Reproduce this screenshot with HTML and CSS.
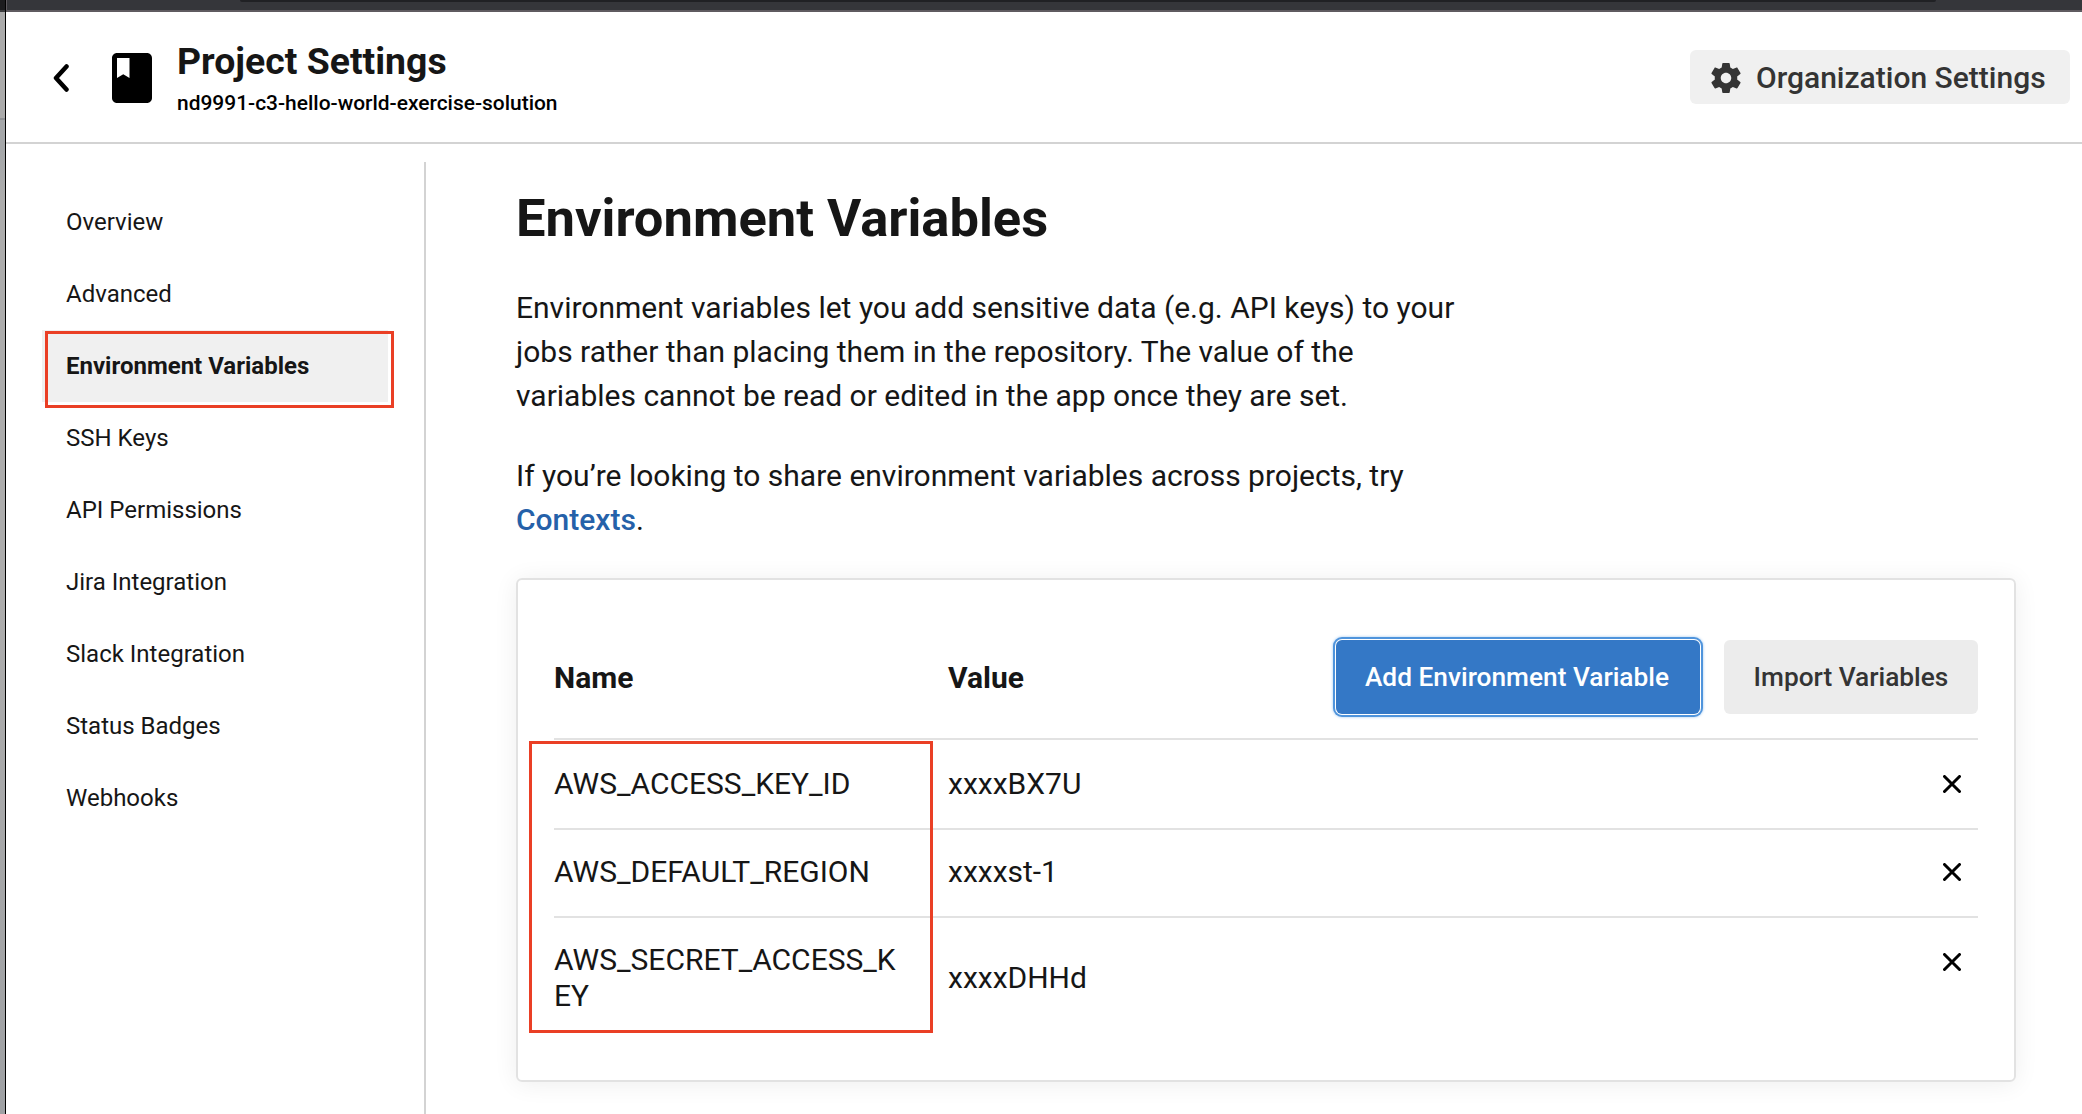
FILE: index.html
```html
<!DOCTYPE html>
<html lang="en">
<head>
<meta charset="utf-8">
<title>Project Settings</title>
<link rel="stylesheet" href="styles.css">
</head>
<body>
<div class="desktop-edge"></div>
<div class="window">
  <div class="browser-bar"><div class="address"></div></div>
  <header class="header">
    <svg class="back" viewBox="0 0 16 28"><path d="M13.500 2.500 3 14 13.500 25.500"/></svg>
    <svg class="book" viewBox="0 0 24 24"><path d="M18 2H6c-1.100 0-2 .9-2 2v16c0 1.100.9 2 2 2h12c1.100 0 2-.9 2-2V4c0-1.100-.9-2-2-2zM6 4h5v8l-2.500-1.500L6 12V4z"/></svg>
    <div class="titles">
      <div class="title"><span>Project Settings</span></div>
      <div class="project"><span>nd9991-c3-hello-world-exercise-solution</span></div>
    </div>
    <a class="org"><svg class="gear" viewBox="0 0 24 24"><path d="M19.430 12.980c.04-.32.07-.64.07-.98s-.03-.66-.07-.98l2.110-1.650c.19-.15.24-.42.12-.64l-2-3.460c-.12-.22-.39-.3-.61-.22l-2.490 1c-.52-.4-1.080-.73-1.690-.98l-.38-2.650C14.460 2.180 14.250 2 14 2h-4c-.25 0-.46.18-.49.42l-.38 2.650c-.61.25-1.170.59-1.690.98l-2.490-1c-.23-.09-.49 0-.61.22l-2 3.460c-.13.22-.07.49.12.64l2.110 1.650c-.04.32-.07.65-.07.98s.03.66.07.98l-2.110 1.650c-.19.15-.24.42-.12.64l2 3.460c.12.22.39.3.61.22l2.490-1c.52.4 1.080.73 1.690.98l.38 2.650c.03.24.24.42.49.42h4c.25 0 .46-.18.49-.42l.38-2.650c.61-.25 1.170-.59 1.690-.98l2.490 1c.23.09.49 0 .61-.22l2-3.460c.12-.22.07-.49-.12-.64l-2.110-1.650zM12 15.500c-1.930 0-3.500-1.570-3.500-3.500s1.570-3.500 3.500-3.500 3.500 1.570 3.500 3.500-1.570 3.500-3.500 3.500z"/></svg><span>Organization Settings</span></a>
  </header>
  <div class="body">
    <nav class="nav">
      <a>Overview</a>
      <a>Advanced</a>
      <a class="active">Environment Variables<i class="mark mark-nav"></i></a>
      <a>SSH Keys</a>
      <a>API Permissions</a>
      <a>Jira Integration</a>
      <a>Slack Integration</a>
      <a>Status Badges</a>
      <a>Webhooks</a>
    </nav>
    <main class="main">
      <h1><span>Environment Variables</span></h1>
      <p>Environment variables let you add sensitive data (e.g. API keys) to your<br>jobs rather than placing them in the repository. The value of the<br>variables cannot be read or edited in the app once they are set.</p>
      <p>If you’re looking to share environment variables across projects, try<br><a class="link">Contexts</a>.</p>
      <section class="card">
        <div class="row head">
          <div class="label">Name</div><div class="label">Value</div>
          <div class="actions"><button class="btn primary">Add Environment Variable</button><button class="btn">Import Variables</button></div>
        </div>
        <div class="row">
          <div>AWS_ACCESS_KEY_ID</div><div>xxxxBX7U</div>
          <svg class="x" viewBox="0 0 18 18"><path d="M1.500 1.500l15 15M16.500 1.500l-15 15"/></svg>
        </div>
        <div class="row">
          <div>AWS_DEFAULT_REGION</div><div>xxxxst-1</div>
          <svg class="x" viewBox="0 0 18 18"><path d="M1.500 1.500l15 15M16.500 1.500l-15 15"/></svg>
        </div>
        <div class="row last">
          <div>AWS_SECRET_ACCESS_K<br>EY</div><div>xxxxDHHd</div>
          <svg class="x" viewBox="0 0 18 18"><path d="M1.500 1.500l15 15M16.500 1.500l-15 15"/></svg>
        </div>
        <i class="mark mark-names"></i>
      </section>
    </main>
  </div>
</div>
</body>
</html>
```
FILE: styles.css
```css
* { box-sizing: border-box; }
body {
  margin: 0;
  height: 1114px;
  overflow: hidden;
  display: flex;
  background: #fff;
  color: #161616;
  font-family: Roboto, "Liberation Sans", sans-serif;
}
.desktop-edge {
  width: 6px;
  flex: none;
  border-right: 1px solid #000;
  background: linear-gradient(#1c1c1e 0 10px, #3c3c3e 10px 12px, #ababab 12px 118px, #8f9194 118px 120px, #a5a7a9 120px 150px, #adadad 200px 600px, #9fa1a4);
}
.window { flex: 1; display: flex; flex-direction: column; min-width: 0; }
.browser-bar {
  height: 12px;
  flex: none;
  background: #35363a;
  border-bottom: 2px solid #5f5b60;
  border-left: 1px solid #5f5b60;
}
.address {
  height: 2px;
  margin: 0 146px 0 233px;
  background: #202124;
  border-radius: 0 0 8px 8px;
}
.header {
  height: 132px;
  flex: none;
  display: flex;
  align-items: center;
  padding: 0 12px 0 47px;
  border-bottom: 2px solid #d3d3d3;
}
.back { width: 16px; height: 28px; margin-top: 1px; fill: none; stroke: #000; stroke-width: 4.5; stroke-linecap: round; stroke-linejoin: round; }
.book { width: 60px; height: 60px; margin: 2px 0 0 33px; }
.titles { margin-left: 15px; flex: 1; padding-top: 2px; }
.title { font-size: 37.4px; font-weight: 700; line-height: 42px; }
.project { font-size: 20.95px; font-weight: 500; line-height: 28px; margin-top: 7px; color: #000; }
.org {
  width: 380px;
  height: 54px;
  display: flex;
  align-items: center;
  gap: 12px;
  padding-left: 18px;
  border-radius: 6px;
  background: #f0f0f0;
  color: #343434;
  font-size: 30px;
  font-weight: 500;
  white-space: nowrap;
}
.gear { width: 36px; height: 36px; margin-top: 2px; fill: #343434; }
.body { flex: 1; display: flex; }
.nav {
  width: 420px;
  flex: none;
  margin-top: 18px;
  padding: 24px 36px 0;
  border-right: 2px solid #d3d3d3;
  font-size: 24px;
}
.nav a { position: relative; display: block; height: 72px; line-height: 72px; padding-left: 24px; }
.nav .active { background: #f0f0f0; font-weight: 700; }
.mark { position: absolute; border: 3px solid #ea3f25; }
.mark-nav { left: 3px; top: 1px; width: 349px; height: 77px; }
.main { width: 1590px; padding: 42px 0 0 90px; }
h1 { margin: 0 0 36px; font-size: 52.5px; font-weight: 700; line-height: 64px; }
p { margin: 0 0 36px; font-size: 30px; line-height: 44px; white-space: nowrap; }
.link { color: #2561a9; font-weight: 500; }
.card {
  position: relative;
  width: 1500px;
  height: 504px;
  padding: 30px 36px;
  border: 2px solid #e2e2e2;
  border-radius: 6px;
  box-shadow: 0 2px 24px rgba(0, 0, 0, .07);
}
.row {
  display: grid;
  grid-template-columns: 394px 1fr auto;
  align-items: center;
  height: 88px;
  padding-bottom: 2px;
  border-bottom: 2px solid #e2e2e2;
  font-size: 30px;
  line-height: 36px;
}
.row.head { height: 130px; padding: 6px 0 0; font-weight: 700; }
.label { padding-top: 2px; }
.row.head + .row { height: 90px; padding: 0; }
.row.last { height: 120px; padding: 0; border: 0; }
.last .x { align-self: start; margin-top: 35px; }
.x { width: 18px; height: 18px; margin-right: 17px; fill: none; stroke: #000; stroke-width: 3; stroke-linecap: round; }
.actions { display: flex; gap: 24px; }
.btn {
  width: 254px;
  height: 74px;
  padding: 0;
  border: 0;
  border-radius: 6px;
  background: #ececec;
  color: #343434;
  font: 500 26.25px Roboto, sans-serif;
}
.primary {
  width: 364px;
  padding-right: 2px;
  background: #3478c6;
  color: #fff;
  box-shadow: 0 0 0 1px #fff, 0 0 0 3px #4f94dc, 0 0 3px 3px #9cc5ef;
}
.mark-names { left: 11px; top: 161px; width: 404px; height: 292px; }
```
